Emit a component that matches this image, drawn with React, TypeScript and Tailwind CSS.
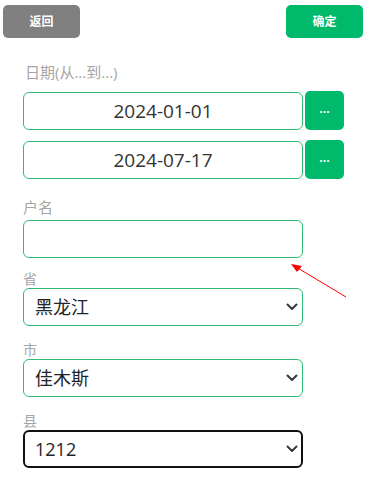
import React from 'react';

const font = { fontFamily: '"Open Sans", "Noto Sans CJK SC", sans-serif' };

const Chevron = () => (
  <svg className="pointer-events-none absolute right-[5px] top-1/2 -translate-y-1/2" width="12" height="8" viewBox="0 0 12 8">
    <polyline points="1.5,1.5 6,6 10.5,1.5" fill="none" stroke="#343a40" strokeWidth="2" strokeLinecap="round" strokeLinejoin="round" />
  </svg>
);

const SelectBox: React.FC<{ value: string; focused?: boolean }> = ({ value, focused }) => (
  <div className="relative w-[280px] h-[38px]">
    <select
      defaultValue={value}
      className={
        focused
          ? 'appearance-none w-full h-full rounded-[6px] border-2 border-[#111] bg-white pl-[10px] text-[18px] text-[#212529] outline-none'
          : 'appearance-none w-full h-full rounded-[6px] border border-[#2dbd78] bg-white pl-[11px] text-[18px] text-[#212529] outline-none'
      }
      style={font}
    >
      <option>{value}</option>
    </select>
    <Chevron />
  </div>
);

const DateRow: React.FC<{ value: string; className?: string }> = ({ value, className }) => (
  <div className={`flex items-end gap-[2px] ${className ?? ''}`}>
    <input
      readOnly
      value={value}
      className="w-[280px] h-[38px] rounded-[6px] border border-[#2dbd78] bg-white text-center text-[19px] text-[#333] outline-none"
      style={font}
    />
    <button className="w-[39px] h-[39px] rounded-[5px] bg-[#00b96b] text-white text-[12px] font-bold leading-none pb-[4px]">
      ...
    </button>
  </div>
);

export default function App() {
  return (
    <div className="relative w-[377px] h-[490px] bg-white overflow-hidden" style={font}>
      <div className="flex justify-between pl-[3px] pr-[14px] pt-[5px]">
        <button className="w-[77px] h-[33px] rounded-[5px] bg-[#808080] text-white text-[12px] font-bold">返回</button>
        <button className="w-[77px] h-[33px] rounded-[5px] bg-[#00b96b] text-white text-[12px] font-bold">确定</button>
      </div>

      <div className="pl-[23px]">
        <div className="mt-[24px] pl-[2px] h-[20px] leading-[20px] text-[15px] text-[#a6a6a6]">日期(从...到...)</div>
        <DateRow value="2024-01-01" className="mt-[9px]" />
        <DateRow value="2024-07-17" className="mt-[10px]" />

        <div className="mt-[18px] h-[20px] leading-[20px] text-[15px] text-[#a6a6a6]">户名</div>
        <input
          readOnly
          className="mt-[3px] block w-[280px] h-[38px] rounded-[6px] border border-[#2dbd78] bg-white outline-none"
        />

        <div className="mt-[12px] h-[18px] leading-[18px] text-[14px] text-[#a6a6a6]">省</div>
        <SelectBox value="黑龙江" />

        <div className="mt-[15px] h-[18px] leading-[18px] text-[14px] text-[#a6a6a6]">市</div>
        <SelectBox value="佳木斯" />

        <div className="mt-[15px] h-[18px] leading-[18px] text-[14px] text-[#a6a6a6]">县</div>
        <SelectBox value="1212" focused />
      </div>

      {/* red annotation arrow */}
      <svg className="absolute left-0 top-0 pointer-events-none" width="377" height="490">
        <line x1="346" y1="297" x2="296" y2="267" stroke="#ff0000" strokeWidth="1" />
        <polygon points="291,264 302,266 297,272" fill="#ff0000" />
      </svg>
    </div>
  );
}
